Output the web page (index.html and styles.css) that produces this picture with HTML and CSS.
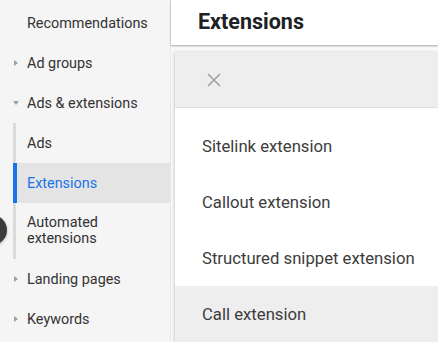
FILE: index.html
```html
<!DOCTYPE html>
<html lang="en">
<head>
  <meta charset="UTF-8">
  <title>Extensions</title>
  <link rel="stylesheet" href="styles.css">
</head>
<body>
  <aside class="sidebar">
    <a class="nav-item" href="#">Recommendations</a>
    <a class="nav-item" href="#"><span class="caret"></span>Ad groups</a>
    <a class="nav-item" href="#"><span class="caret caret-open"></span>Ads &amp; extensions</a>
    <div class="sub-nav">
      <a class="nav-item" href="#">Ads</a>
      <a class="nav-item active" href="#">Extensions</a>
      <a class="nav-item tall" href="#">Automated<br>extensions</a>
    </div>
    <a class="nav-item" href="#"><span class="caret"></span>Landing pages</a>
    <a class="nav-item" href="#"><span class="caret"></span>Keywords</a>
    <div class="fab"></div>
  </aside>

  <main class="main">
    <header class="page-header">
      <h1 class="page-title">Extensions</h1>
    </header>
    <div class="content">
      <div class="panel">
        <div class="panel-head">
          <svg class="close-icon" viewBox="0 0 14 14" fill="none" stroke="currentColor" stroke-width="1.6">
            <path d="M1 1L13 13M13 1L1 13"/>
          </svg>
        </div>
        <ul class="menu">
          <li class="menu-item">Sitelink extension</li>
          <li class="menu-item">Callout extension</li>
          <li class="menu-item">Structured snippet extension</li>
          <li class="menu-item hover">Call extension</li>
        </ul>
      </div>
    </div>
  </main>
</body>
</html>
```

FILE: styles.css
```css
:root {
  --sidebar-bg: #f5f5f5;
  --text: #333333;
  --title: #202124;
  --blue: #1a73e8;
  --line: #dadada;
  --grey-bg: #eeeeee;
}

* {
  margin: 0;
  padding: 0;
  box-sizing: border-box;
  font-family: Roboto, Arial, sans-serif;
}

body {
  display: flex;
  height: 342px;
  overflow: hidden;
  background: #fff;
}

.sidebar {
  position: relative;
  width: 171px;
  flex-shrink: 0;
  background: var(--sidebar-bg);
  padding-top: 3px;
  border-right: 1px solid #e6e6e6;
}

.nav-item {
  display: flex;
  align-items: center;
  height: 40px;
  padding-left: 27px;
  font-size: 14.4px;
  color: var(--text);
  text-decoration: none;
  position: relative;
}

.caret {
  position: absolute;
  left: 14px;
  top: 17px;
  width: 0;
  height: 0;
  border-top: 3px solid transparent;
  border-bottom: 3px solid transparent;
  border-left: 4px solid #9e9e9e;
}

.caret-open {
  left: 13px;
  top: 18px;
  border-left: 3px solid transparent;
  border-right: 3px solid transparent;
  border-top: 4px solid #9e9e9e;
  border-bottom: none;
}

.sub-nav {
  margin-left: 13px;
  border-left: 3px solid var(--line);
}

.sub-nav .nav-item {
  padding-left: 11px;
}

.nav-item.active {
  background: #e4e4e4;
  color: var(--blue);
  margin-left: -3px;
  border-left: 4px solid var(--blue);
  padding-left: 10px;
}

.nav-item.tall {
  height: 56px;
  line-height: 16px;
}

.fab {
  position: absolute;
  left: -23px;
  top: 215px;
  width: 30px;
  height: 30px;
  border-radius: 50%;
  background: #3a3a3a;
  box-shadow: 0 1px 3px rgba(0, 0, 0, 0.3);
}

.main {
  flex: 1;
  display: flex;
  flex-direction: column;
  background: #fafafa;
}

.page-header {
  height: 45px;
  background: #fff;
  padding-left: 27px;
  display: flex;
  align-items: center;
  box-shadow: 0 1px 2px rgba(0, 0, 0, 0.35);
  position: relative;
  z-index: 1;
}

.page-title {
  font-size: 21.5px;
  font-weight: 700;
  color: var(--title);
  padding-bottom: 2px;
}

.content {
  flex: 1;
  padding: 7px 0 0 4px;
}

.panel {
  height: 100%;
  background: #fff;
  box-shadow: -1px 0 3px rgba(0, 0, 0, 0.18);
}

.panel-head {
  height: 56px;
  background: var(--grey-bg);
  border-bottom: 1px solid #e0e0e0;
  display: flex;
  align-items: center;
  padding-left: 32px;
}

.close-icon {
  width: 14px;
  height: 14px;
  color: #a0a0a0;
}

.menu {
  list-style: none;
  padding-top: 10px;
}

.menu-item {
  height: 56px;
  display: flex;
  align-items: center;
  padding-left: 27px;
  font-size: 16.7px;
  color: #3c3c3c;
}

.menu-item.hover {
  background: var(--grey-bg);
}
```
